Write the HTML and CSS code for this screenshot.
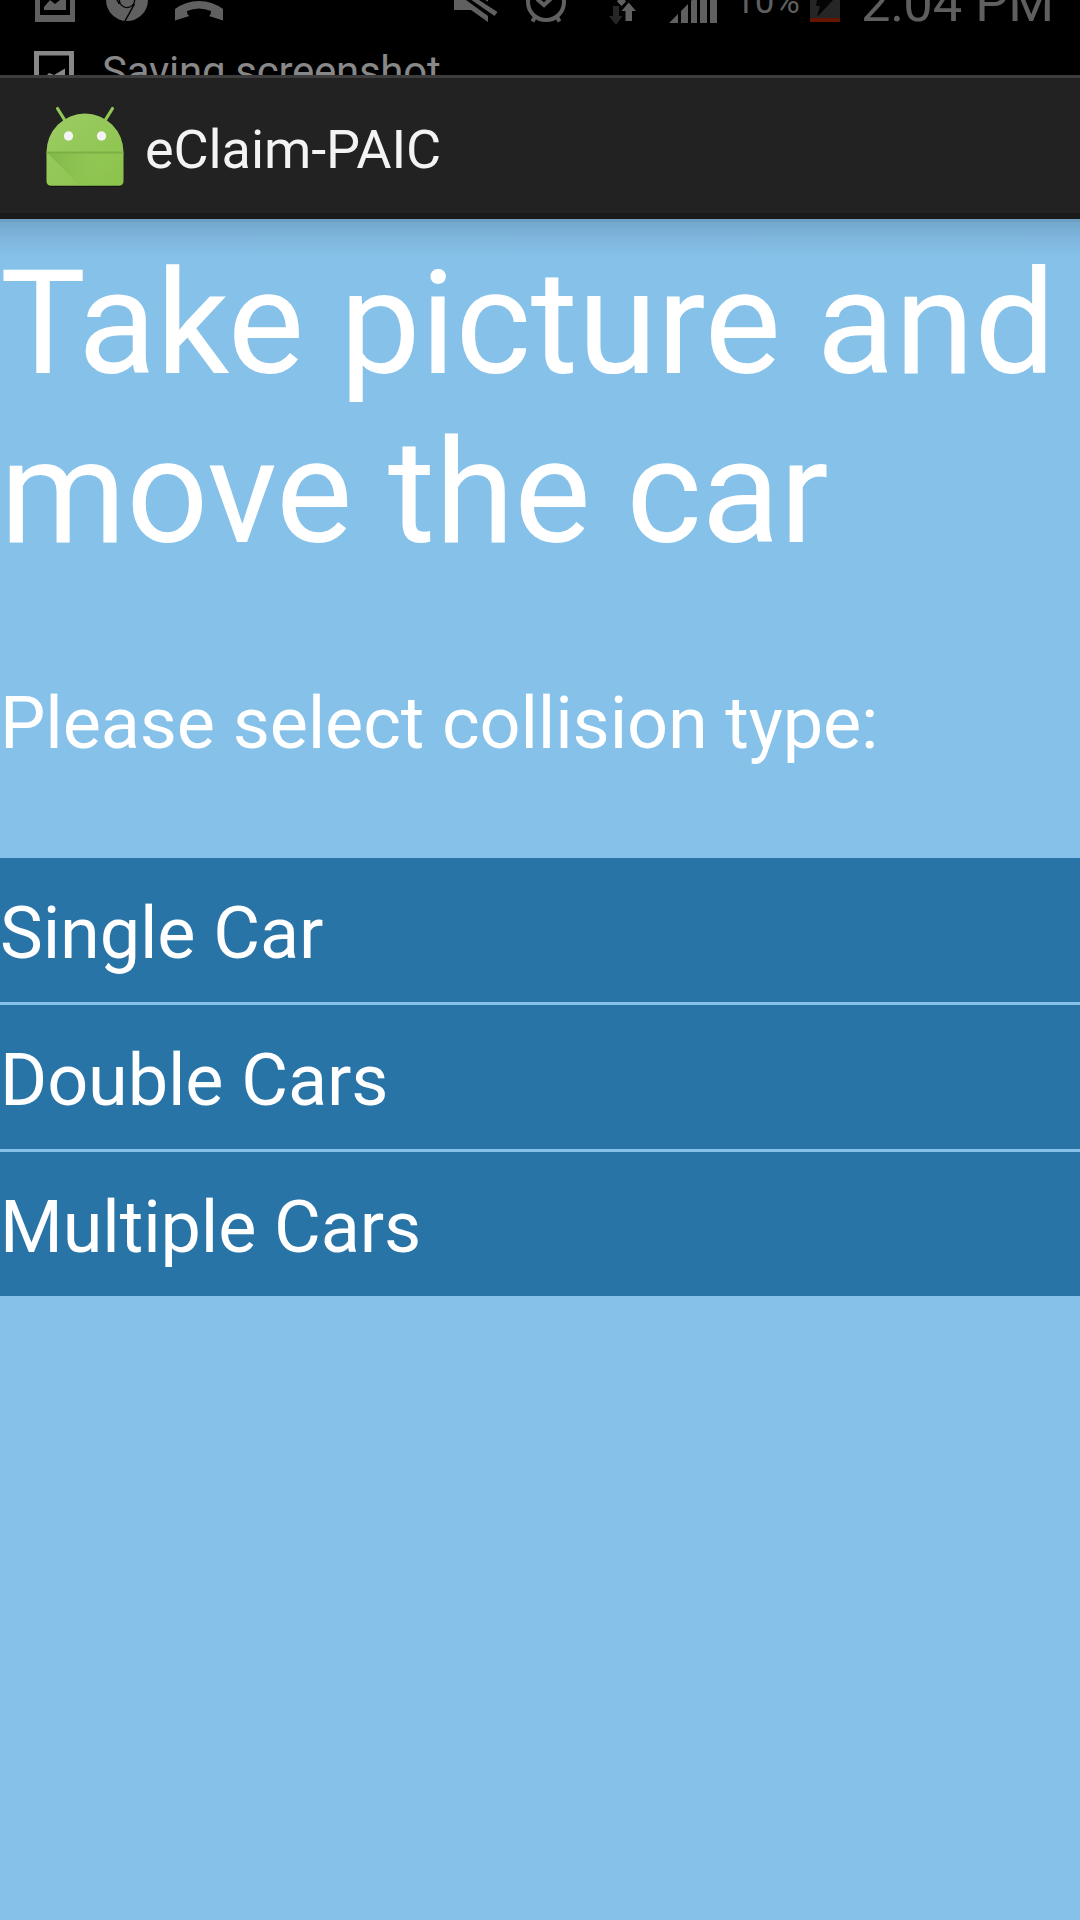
FILE: index.html
```html
<!DOCTYPE html>
<html lang="en">
<head>
<meta charset="utf-8">
<title>eClaim-PAIC</title>
<link rel="stylesheet" href="styles.css">
</head>
<body>
<div class="status">
  <div class="status-row">
    <svg class="icon" width="40" height="25" viewBox="35 0 40 25"><path fill-rule="evenodd" d="M35-10H75V22H35ZM40-6V15H70V-6Z"/><path d="M44 10V7L50 0L55 4L60 0H66V10Z"/></svg>
    <svg class="icon chrome" width="42" height="25" viewBox="106 0 42 25"><circle cx="127" cy="0" r="21"/><circle class="cut" cx="127" cy="0" r="8.3"/><circle cx="127" cy="0" r="7"/><path class="cut-line" d="M134.5 4L125 21M119.500 4L110-12"/></svg>
    <svg class="icon call" width="48" height="25" viewBox="175 0 48 25"><path d="M175 20.500V9Q186 1 199 1T223 9V20.500L209 16Q211 15 211 11Q199 6 187 11Q187 15 189.500 16Z"/></svg>
    <svg class="icon mute" width="44" height="25" viewBox="454 0 44 25"><path d="M454 0H466L488 16V22L471 10H454ZM471.500 0H479L497.500 12L494.500 16ZM485 0H488V1.500Z"/></svg>
    <svg class="icon alarm" width="42" height="25" viewBox="525 0 42 25"><g class="stroke"><circle cx="546" cy="2" r="18"/><path d="M537-1L544 5L556-6M535 17L532.500 21.500M557 17L559.500 21.500"/></g></svg>
    <svg class="icon data" width="28" height="26" viewBox="609 0 28 26"><path class="dim" d="M613 6H619V16H622.500L616 25L609 16H613Z"/><path d="M625.500 21V11H621.500L628.700 2.500L636 11H632V21ZM617 1.500L618 0H625L626 1.500L621.500 6Z"/></svg>
    <svg class="icon signal" width="48" height="25" viewBox="669 0 48 25"><path d="M669 23L678 14V23ZM681 23V11L688 4V23ZM691 23V1L692 0H697V23ZM700 0H707V23H700ZM710 0H717V23H710Z"/></svg>
    <span class="percent">10%</span>
    <svg class="icon battery" width="30" height="25" viewBox="810 0 30 25"><path class="dim" d="M810 0H840V18H810Z"/><path class="low" d="M810 18H840V22H810Z"/><path class="bolt" d="M817 0H833L817 17L820 6H816Z"/></svg>
    <span class="time">2:04 PM</span>
  </div>
  <div class="ticker">
    <svg class="ticker-icon" width="40" height="24" viewBox="34 51 40 24"><path fill-rule="evenodd" d="M34 51H74V91H34ZM39 55.500V86H69V55.500Z"/><path d="M44 78L49 73L54 75L65 68.500V86H44Z"/></svg>
    <span class="ticker-text">Saving screenshot</span>
  </div>
</div>
<header class="appbar">
  <svg class="logo" width="80" height="84" viewBox="45 105 80 84">
    <defs>
      <linearGradient id="body" x1="0" y1="0" x2="1" y2="1"><stop offset="0" stop-color="#9ccc65"/><stop offset="1" stop-color="#8bc34a"/></linearGradient>
      <linearGradient id="fold" x1="0" y1="0" x2="1" y2="0"><stop offset="0" stop-color="#7fb548"/><stop offset="1" stop-color="#8bc34a" stop-opacity="0"/></linearGradient>
      <linearGradient id="seam" x1="0" y1="0" x2="0" y2="1"><stop offset="0" stop-color="#6f9e3e"/><stop offset="1" stop-color="#8bc34a" stop-opacity="0"/></linearGradient>
    </defs>
    <path d="M57.500 108.500L65 120.500M112.500 108.500L105 120.500" stroke="#8fc753" stroke-width="3.200" stroke-linecap="round"/>
    <path class="logo-shadow" d="M47 180H123V182Q123 187 118 187H52Q47 187 47 182Z"/>
    <path fill="url(#body)" d="M46.500 152A38.500 38.500 0 0 1 123.500 152V181Q123.500 185.700 118.800 185.700H51.200Q46.500 185.700 46.500 181Z"/>
    <path fill="url(#fold)" d="M47 152.500H100L96 185.500H80Z"/>
    <path fill="url(#seam)" d="M46.500 151.700H123.500V155H46.500Z"/>
    <circle cx="68.500" cy="136" r="4.700" fill="#f3f3f3"/><circle cx="101.500" cy="136" r="4.700" fill="#f3f3f3"/>
  </svg>
  <span class="app-title">eClaim-PAIC</span>
</header>
<main class="content">
  <h1 class="title">Take picture and move the car</h1>
  <p class="prompt">Please select collision type:</p>
  <ul class="options">
    <li class="option">Single Car</li>
    <li class="option">Double Cars</li>
    <li class="option">Multiple Cars</li>
  </ul>
</main>
</body>
</html>
```
FILE: styles.css
```css
* { box-sizing: border-box; }
body {
  margin: 0;
  width: 1080px;
  height: 1920px;
  display: flex;
  flex-direction: column;
  overflow: hidden;
  background: #85c1e9;
  font-family: Roboto, sans-serif;
  color: #fff;
}
.status {
  height: 75px;
  background: #000;
  color: #5f5f5f;
  overflow: hidden;
}
.status-row {
  display: flex;
  align-items: flex-start;
  height: 26px;
  padding-left: 35px;
}
.icon { flex: none; fill: #606060; }
.cut { fill: #000; }
.cut-line { fill: none; stroke: #000; stroke-width: 1.5; }
.stroke { fill: none; stroke: #606060; stroke-width: 4; }
.dim { fill: #262626; }
.low { fill: #651500; }
.bolt { fill: #050505; }
.chrome { margin-left: 31px; }
.call { margin-left: 27px; }
.mute { margin-left: 231px; }
.alarm { margin-left: 27px; }
.data { margin-left: 42px; }
.signal { margin-left: 32px; }
.percent {
  width: 75px;
  margin-left: 18px;
  font-size: 35px;
  line-height: 4px;
  white-space: nowrap;
}
.time {
  margin-left: 21px;
  font-size: 52.5px;
  line-height: 6px;
  white-space: nowrap;
}
.ticker {
  display: flex;
  align-items: flex-start;
  height: 49px;
  padding-left: 34px;
  overflow: hidden;
}
.ticker-icon { margin-top: 25px; fill: #888; }
.ticker-text {
  margin-left: 28px;
  font-size: 42px;
  letter-spacing: -0.27px;
  line-height: 91px;
  color: #888;
}
.appbar {
  display: flex;
  align-items: flex-start;
  height: 144px;
  padding-left: 45px;
  background: #222;
  border-top: 3px solid #3d3d3d;
  border-bottom: 6px solid #1a1a1a;
}
.logo { margin-top: 27px; }
.logo-shadow { fill: #151515; }
.app-title {
  margin-left: 20px;
  font-size: 54px;
  letter-spacing: -0.1px;
  line-height: 143px;
  color: #f3f3f3;
}
.content {
  flex: 1;
  background: linear-gradient(#6c9fc3 0 3px, #74a8cd 3px, #7fb7de 20px, #85c1e9 38px);
}
.title {
  margin: 0;
  padding-top: 20px;
  font-size: 144px;
  font-weight: 400;
  letter-spacing: -0.06px;
  line-height: 169px;
}
.prompt {
  margin: 0;
  padding-top: 105px;
  height: 281px;
  font-size: 72px;
  letter-spacing: -0.12px;
  line-height: 84px;
}
.options {
  display: flex;
  flex-direction: column;
  gap: 3px;
  margin: 0;
  padding: 0;
  list-style: none;
}
.option {
  height: 144px;
  padding-top: 34px;
  background: #2874a6;
  font-size: 72px;
  letter-spacing: -0.12px;
  line-height: 84px;
}
```
